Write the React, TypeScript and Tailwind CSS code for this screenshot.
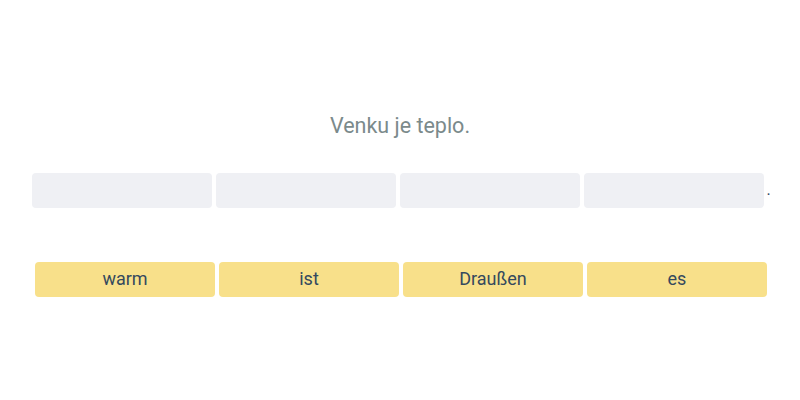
import React from 'react';

const words = ['warm', 'ist', 'Draußen', 'es'];

export default function App() {
  return (
    <div className="w-full h-[400px] bg-white flex flex-col items-center pt-[111px]" style={{ fontFamily: 'Roboto, "Noto Sans", sans-serif' }}>
      <div className="text-[21.5px] leading-[30px] text-[#7b8a8b]">Venku je teplo.</div>

      <div className="mt-[32px] flex items-center pl-[3px]">
        <div className="flex gap-1">
          {words.map((_, i) => (
            <div key={i} className="w-[180px] h-[35px] rounded-[4px] bg-[#eff0f4]" />
          ))}
        </div>
        <span className="ml-[2px] text-[16px] leading-none text-[#34495e] pb-[2px]">.</span>
      </div>

      <div className="mt-[54px] flex gap-1 pl-[2px]">
        {words.map((w) => (
          <button
            key={w}
            className="w-[180px] h-[35px] rounded-[4px] bg-[#f8e08a] text-[18px] leading-[24px] pb-[2px] text-[#34495e] flex items-center justify-center"
          >
            {w}
          </button>
        ))}
      </div>
    </div>
  );
}
